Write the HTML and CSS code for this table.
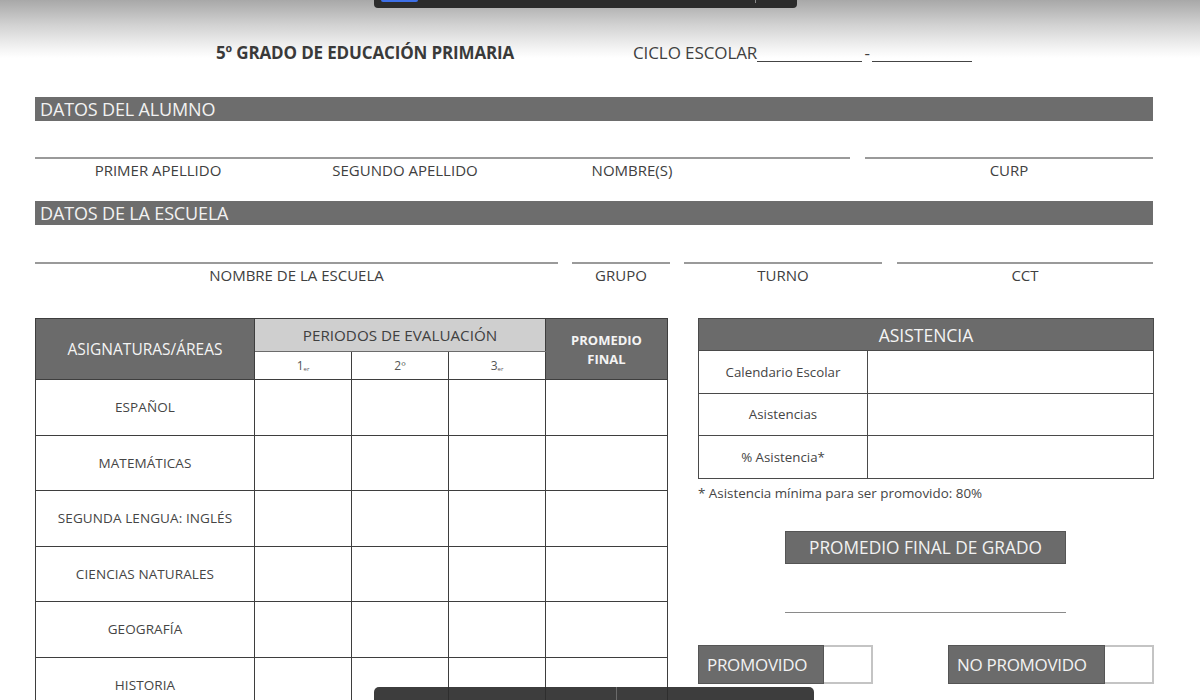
FILE: index.html
```html
<!DOCTYPE html>
<html lang="es">
<head>
<meta charset="utf-8">
<title>Boleta 5º grado</title>
<link rel="stylesheet" href="styles.css">
</head>
<body>
<div class="topbar"><span class="chip"></span><span class="dot"></span></div>
<div class="sheet">
  <div class="title-row">
    <div class="title">5º GRADO DE EDUCACIÓN PRIMARIA</div>
    <div class="ciclo"><span class="ciclo-txt">CICLO ESCOLAR</span><span class="blank b1"></span><span class="dash">-</span><span class="blank b2"></span></div>
  </div>

  <div class="section first">DATOS DEL ALUMNO</div>
  <div class="fields f1">
    <div class="field wide">
      <div class="line"></div>
      <div class="sublabels">
        <span class="lbl l1">PRIMER APELLIDO</span>
        <span class="lbl l2">SEGUNDO APELLIDO</span>
        <span class="lbl l3">NOMBRE(S)</span>
      </div>
    </div>
    <div class="field">
      <div class="line"></div>
      <span class="lbl">CURP</span>
    </div>
  </div>

  <div class="section">DATOS DE LA ESCUELA</div>
  <div class="fields f2">
    <div class="field"><div class="line"></div><span class="lbl">NOMBRE DE LA ESCUELA</span></div>
    <div class="field"><div class="line"></div><span class="lbl">GRUPO</span></div>
    <div class="field"><div class="line"></div><span class="lbl">TURNO</span></div>
    <div class="field"><div class="line"></div><span class="lbl">CCT</span></div>
  </div>

  <div class="lower">
    <table class="grades">
      <colgroup>
        <col class="c-subj"><col class="c-p"><col class="c-p"><col class="c-p"><col class="c-fin">
      </colgroup>
      <thead>
        <tr class="h1">
          <th rowspan="2" class="dark subj-h">ASIGNATURAS/ÁREAS</th>
          <th colspan="3" class="light">PERIODOS DE EVALUACIÓN</th>
          <th rowspan="2" class="dark fin-h">PROMEDIO<br>FINAL</th>
        </tr>
        <tr class="h2">
          <th class="per">1<sub>er</sub></th>
          <th class="per">2º</th>
          <th class="per">3<sub>er</sub></th>
        </tr>
      </thead>
      <tbody>
        <tr><td class="subj">ESPAÑOL</td><td></td><td></td><td></td><td></td></tr>
        <tr><td class="subj">MATEMÁTICAS</td><td></td><td></td><td></td><td></td></tr>
        <tr><td class="subj">SEGUNDA LENGUA: INGLÉS</td><td></td><td></td><td></td><td></td></tr>
        <tr><td class="subj">CIENCIAS NATURALES</td><td></td><td></td><td></td><td></td></tr>
        <tr><td class="subj">GEOGRAFÍA</td><td></td><td></td><td></td><td></td></tr>
        <tr><td class="subj">HISTORIA</td><td></td><td></td><td></td><td></td></tr>
      </tbody>
    </table>

    <div class="right">
      <table class="attend">
        <colgroup><col class="a-l"><col class="a-v"></colgroup>
        <thead><tr><th colspan="2">ASISTENCIA</th></tr></thead>
        <tbody>
          <tr><td>Calendario Escolar</td><td></td></tr>
          <tr><td>Asistencias</td><td></td></tr>
          <tr><td>% Asistencia*</td><td></td></tr>
        </tbody>
      </table>
      <div class="note">* Asistencia mínima para ser promovido: 80%</div>
      <div class="final-box">PROMEDIO FINAL DE GRADO</div>
      <div class="final-line"></div>
      <div class="status-row">
        <div class="status"><span class="tag">PROMOVIDO</span><span class="check"></span></div>
        <div class="status"><span class="tag">NO PROMOVIDO</span><span class="check"></span></div>
      </div>
    </div>
  </div>
</div>
<div class="bottombar"><span class="sep"></span></div>
</body>
</html>
```

FILE: styles.css
```css
* { box-sizing: border-box; }
html, body { margin: 0; padding: 0; }
body {
  width: 1200px;
  height: 700px;
  overflow: hidden;
  font-family: "Open Sans", "Noto Sans", sans-serif;
  color: #404040;
  background: linear-gradient(to bottom, #a8a8a8 0px, #d2d2d2 25px, #f3f3f3 48px, #ffffff 58px, #ffffff 100%);
  position: relative;
}

.topbar {
  position: absolute;
  left: 374px;
  top: 0;
  width: 423px;
  height: 8px;
  background: #2c2c2c;
  border-radius: 0 0 4px 4px;
}
.topbar .chip {
  position: absolute;
  left: 7px;
  top: 0;
  width: 37px;
  height: 2px;
  background: #3d6fe6;
  border-radius: 0 0 2px 2px;
}
.topbar .dot {
  position: absolute;
  left: 381px;
  top: 0;
  width: 1px;
  height: 3px;
  background: #888;
}

.bottombar {
  position: absolute;
  left: 374px;
  top: 687px;
  width: 440px;
  height: 20px;
  background: rgba(45, 45, 45, 0.92);
  border-radius: 5px 5px 0 0;
}
.bottombar .sep {
  position: absolute;
  left: 242px;
  top: 0;
  width: 1px;
  height: 20px;
  background: #6a6a6a;
}

.sheet {
  margin-left: 35px;
  width: 1118px;
  padding-top: 38px;
}

.title-row {
  display: flex;
  align-items: flex-end;
  height: 26px;
  padding-left: 181px;
}
.title {
  width: 417px;
  font-weight: 700;
  font-size: 17px;
  line-height: 23px;
  letter-spacing: -0.15px;
  color: #3a3a3a;
}
.ciclo {
  font-size: 17px;
  line-height: 23px;
  letter-spacing: -0.1px;
  color: #404040;
  display: flex;
  align-items: flex-end;
}
.blank {
  display: inline-block;
  border-bottom: 1.5px solid #444;
  height: 10px;
  margin-bottom: 2px;
}
.b1 { width: 105px; }
.b2 { width: 100px; }
.dash { width: 10px; text-align: center; }

.section {
  height: 24px;
  background: #6d6d6d;
  color: #f2f2f2;
  font-size: 18px;
  line-height: 24px;
  padding-left: 5px;
  letter-spacing: -0.15px;
}
.section.first { margin-top: 33px; }

.fields {
  display: flex;
  height: 80px;
  padding-top: 36px;
}
.f1 { gap: 15px; }
.f1 .wide { width: 815px; }
.f1 .field:last-child { width: 288px; }
.f2 { gap: 14px; height: 93px; padding-top: 37px; }
.f2 .field:nth-child(1) { width: 523px; }
.f2 .field:nth-child(2) { width: 98px; }
.f2 .field:nth-child(3) { width: 198px; margin-right: 1px; }
.f2 .field:nth-child(4) { width: 256px; }
.field {
  display: flex;
  flex-direction: column;
  align-items: center;
}
.line {
  width: 100%;
  height: 1.5px;
  background: #9a9a9a;
}
.lbl {
  font-size: 15px;
  line-height: 18px;
  margin-top: 2px;
  color: #404040;
  letter-spacing: 0;
  white-space: nowrap;
}
.sublabels {
  display: grid;
  grid-template-columns: 246px 248px 206px;
  width: 100%;
  justify-items: center;
}

.lower {
  display: flex;
  gap: 30px;
  align-items: flex-start;
}

table { border-collapse: collapse; }
.grades { width: 632px; table-layout: fixed; }
.c-subj { width: 219px; }
.c-p { width: 97px; }
.c-fin { width: 122px; }
.grades th, .grades td {
  border: 1.5px solid #3e3e3e;
  padding: 0;
  text-align: center;
  font-weight: 400;
}
.grades .dark {
  background: #6b6b6b;
  color: #f4f4f4;
}
.grades .subj-h { font-size: 15.5px; letter-spacing: 0; }
.grades .fin-h { font-size: 13px; font-weight: 700; line-height: 19px; vertical-align: top; padding-top: 12px; }
.grades .light {
  background: #cfcfcf;
  color: #404040;
  font-size: 15.2px;
  letter-spacing: 0;
}
.grades .h1 th { height: 33px; }
.grades .h1 .light { border-bottom-color: #6b6b6b; }
.grades .h2 th { height: 28px; }
.grades .per {
  background: #fff;
  font-size: 12px;
  color: #555;
}
.grades .per sub { font-size: 6px; vertical-align: -1px; }
.grades tbody td { height: 55.5px; }
.grades .subj {
  font-size: 13.5px;
  color: #454545;
  letter-spacing: 0.1px;
}

.right { width: 456px; }
.attend { width: 456px; table-layout: fixed; }
.a-l { width: 169px; }
.attend th, .attend td {
  border: 1.5px solid #4a4a4a;
  padding: 0;
  text-align: center;
}
.attend th {
  background: #6b6b6b;
  color: #f4f4f4;
  height: 32px;
  font-size: 17.5px;
  font-weight: 400;
  letter-spacing: 0;
}
.attend td {
  height: 42.5px;
  font-size: 13.3px;
  color: #454545;
}
.note {
  font-size: 13.4px;
  color: #454545;
  margin-top: 6px;
  line-height: 17px;
}
.final-box {
  margin: 29px 0 0 87px;
  width: 281px;
  height: 33px;
  background: #6b6b6b;
  color: #f2f2f2;
  font-size: 17.3px;
  line-height: 31px;
  text-align: center;
  border: 1px solid #555;
  letter-spacing: 0;
}
.final-line {
  margin: 48px 0 0 87px;
  width: 281px;
  height: 1.5px;
  background: #8a8a8a;
}
.status-row {
  display: flex;
  justify-content: space-between;
  margin-top: 32px;
}
.status { display: flex; }
.tag {
  display: inline-block;
  height: 39px;
  line-height: 37px;
  background: #6b6b6b;
  color: #f2f2f2;
  font-size: 17px;
  padding: 0 8px;
  border: 1px solid #555;
  letter-spacing: -0.3px;
  white-space: nowrap;
}
.status:first-child .tag { width: 126px; }
.status:last-child .tag { width: 157px; }
.check {
  display: inline-block;
  width: 49px;
  height: 39px;
  border: 2px solid #c4c4c4;
  border-left: none;
  background: #fff;
}
```
